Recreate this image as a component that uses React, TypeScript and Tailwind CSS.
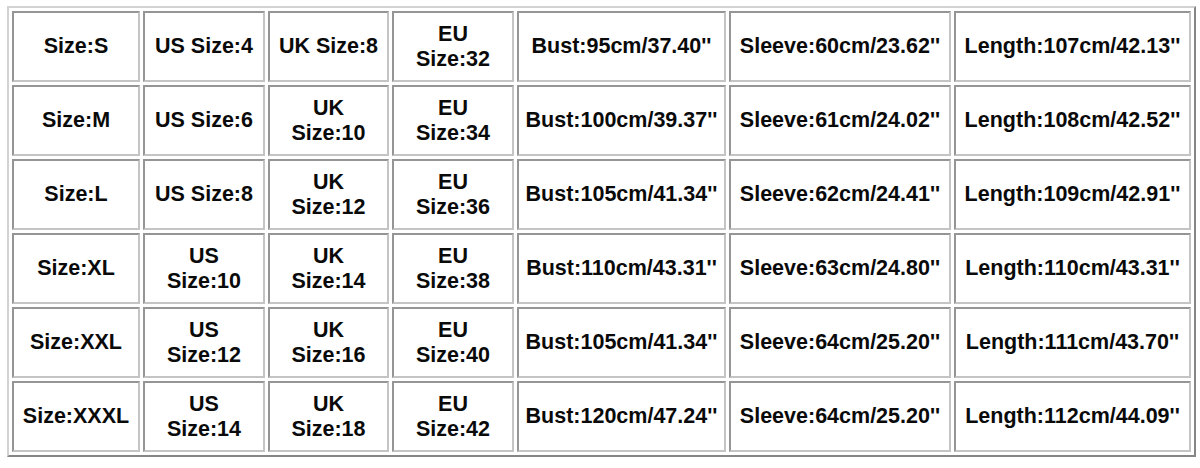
import React from "react";

const widths = [
  "w-[128px]",
  "w-[122px]",
  "w-[121px]",
  "w-[122px]",
  "w-[209px]",
  "w-[222px]",
  "w-[237px]",
];

const rows: string[][] = [
  ["Size:S", "US Size:4", "UK Size:8", "EU\nSize:32", "Bust:95cm/37.40''", "Sleeve:60cm/23.62''", "Length:107cm/42.13''"],
  ["Size:M", "US Size:6", "UK\nSize:10", "EU\nSize:34", "Bust:100cm/39.37''", "Sleeve:61cm/24.02''", "Length:108cm/42.52''"],
  ["Size:L", "US Size:8", "UK\nSize:12", "EU\nSize:36", "Bust:105cm/41.34''", "Sleeve:62cm/24.41''", "Length:109cm/42.91''"],
  ["Size:XL", "US\nSize:10", "UK\nSize:14", "EU\nSize:38", "Bust:110cm/43.31''", "Sleeve:63cm/24.80''", "Length:110cm/43.31''"],
  ["Size:XXL", "US\nSize:12", "UK\nSize:16", "EU\nSize:40", "Bust:105cm/41.34''", "Sleeve:64cm/25.20''", "Length:111cm/43.70''"],
  ["Size:XXXL", "US\nSize:14", "UK\nSize:18", "EU\nSize:42", "Bust:120cm/47.24''", "Sleeve:64cm/25.20''", "Length:112cm/44.09''"],
];

const App: React.FC = () => {
  return (
    <div className="bg-white w-[1200px] h-[468px] pt-[6px] pl-[7px]">
      <table className="table-fixed border-separate border-spacing-[3px] w-[1189px] border-2 border-t-[#d2d2d2] border-l-[#d2d2d2] border-r-[#858585] border-b-[#858585] font-['Liberation_Sans',Arial,sans-serif] font-bold text-[21.5px] leading-[25px] text-[#0a0a0a]">
        <tbody>
          {rows.map((row, r) => (
            <tr key={r}>
              {row.map((cell, c) => (
                <td
                  key={c}
                  className={`${r === 0 ? widths[c] : ""} h-[71px] p-0 text-center align-middle whitespace-pre-line border-2 border-t-[#959595] border-l-[#959595] border-r-[#c4c4c4] border-b-[#c4c4c4]`}
                >
                  {cell}
                </td>
              ))}
            </tr>
          ))}
        </tbody>
      </table>
    </div>
  );
};

export default App;
